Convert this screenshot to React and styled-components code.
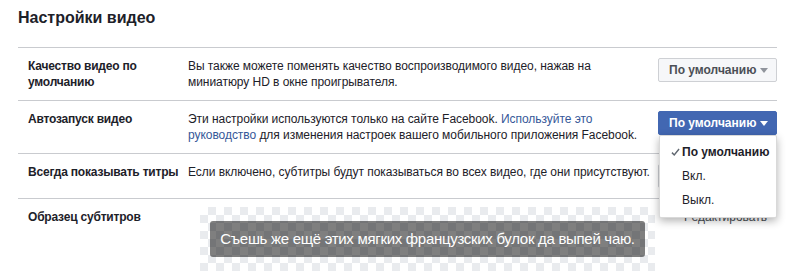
import styled, { createGlobalStyle } from "styled-components";

const GlobalStyle = createGlobalStyle`
  body {
    margin: 0;
    background: #fff;
    font-family: "Liberation Sans", Arial, Helvetica, sans-serif;
    color: #1d2129;
  }
`;

const Arrow = ({ color }) => (
  <svg width="8" height="5" viewBox="0 0 8 5">
    <path d="M0 0h8L4 5z" fill={color} />
  </svg>
);

const Check = () => (
  <svg width="9" height="8" viewBox="0 0 10 9">
    <path d="M1 5.2l2.6 2.6L9 1.2" fill="none" stroke="#606770" strokeWidth="1.6" />
  </svg>
);

const App = () => {
  return (
    <>
      <GlobalStyle />
      <Page>
        <Title>Настройки видео</Title>
        <Row>
          <Label>Качество видео по умолчанию</Label>
          <Desc>
            Вы также можете поменять качество воспроизводимого видео, нажав на
            миниатюру HD в окне проигрывателя.
          </Desc>
          <Action>
            <Select>
              По умолчанию <Arrow color="#90949c" />
            </Select>
          </Action>
        </Row>
        <Row>
          <Label>Автозапуск видео</Label>
          <Desc>
            Эти настройки используются только на сайте Facebook.{" "}
            <Link href="#">Используйте это руководство</Link> для изменения
            настроек вашего мобильного приложения Facebook.
          </Desc>
          <Action>
            <Select primary>
              По умолчанию <Arrow color="#fff" />
            </Select>
            <Menu>
              <MenuItem selected>
                <CheckSlot>
                  <Check />
                </CheckSlot>
                По умолчанию
              </MenuItem>
              <MenuItem>
                <CheckSlot />
                Вкл.
              </MenuItem>
              <MenuItem>
                <CheckSlot />
                Выкл.
              </MenuItem>
            </Menu>
          </Action>
        </Row>
        <Row>
          <Label>Всегда показывать титры</Label>
          <Desc>
            Если включено, субтитры будут показываться во всех видео, где они
            присутствуют.
          </Desc>
          <Action>
            <Select>
              Выкл. <Arrow color="#90949c" />
            </Select>
          </Action>
        </Row>
        <Row>
          <Label>Образец субтитров</Label>
          <Desc>
            <Preview>
              <Caption>
                Съешь же ещё этих мягких французских булок да выпей чаю.
              </Caption>
            </Preview>
          </Desc>
          <Action>
            <EditLink href="#">Редактировать</EditLink>
          </Action>
        </Row>
      </Page>
    </>
  );
};

const Page = styled.div`
  width: 759px;
  padding: 0 16px 0 18px;
`;

const Title = styled.h2`
  margin: 0;
  padding: 8px 0 19px;
  font-size: 16px;
  line-height: 20px;
  font-weight: bold;
  color: #1d2129;
`;

const Row = styled.div`
  display: flex;
  align-items: flex-start;
  border-top: 1px solid #c9cbcf;
  padding: 10px 0;
  font-size: 12px;
  line-height: 16px;
`;

const Label = styled.div`
  width: 155px;
  padding: 0 5px 0 10px;
  font-weight: bold;
  letter-spacing: -0.2px;
  color: #1d2129;
`;

const Desc = styled.div`
  flex: 1;
  padding-right: 3px;
  letter-spacing: -0.05px;
  color: #1d2129;
`;

const Link = styled.a`
  color: #365899;
  text-decoration: none;
`;

const Action = styled.div`
  position: relative;
  width: 119px;
  display: flex;
  justify-content: flex-end;
`;

const Select = styled.button`
  width: 119px;
  height: 24px;
  display: flex;
  align-items: center;
  justify-content: space-between;
  padding: 0 8px 0 10px;
  border: 1px solid ${(p) => (p.primary ? "#4267b2" : "#ced0d4")};
  border-radius: 2px;
  background: ${(p) => (p.primary ? "#4267b2" : "#f6f7f9")};
  color: ${(p) => (p.primary ? "#fff" : "#4b4f56")};
  font-family: inherit;
  font-size: 12px;
  font-weight: bold;
  cursor: pointer;
`;

const Menu = styled.div`
  position: absolute;
  top: 24px;
  left: 1px;
  right: 0;
  z-index: 10;
  padding: 4px 0 5px;
  background: #fff;
  border: 1px solid rgba(0, 0, 0, 0.15);
  border-radius: 2px;
  box-shadow: 0 3px 8px rgba(0, 0, 0, 0.3);
`;

const MenuItem = styled.div`
  display: flex;
  align-items: center;
  height: 24px;
  padding-left: 11px;
  font-size: 12px;
  font-weight: ${(p) => (p.selected ? "bold" : "normal")};
  color: #1d2129;
`;

const CheckSlot = styled.span`
  width: 11px;
  display: flex;
  align-items: center;
`;

const Preview = styled.div`
  margin: -2px 0 0 12px;
  height: 64px;
  display: flex;
  align-items: center;
  justify-content: center;
  background-color: #fff;
  background-image: linear-gradient(45deg, #e9ebee 25%, transparent 25%, transparent 75%, #e9ebee 75%),
    linear-gradient(45deg, #e9ebee 25%, transparent 25%, transparent 75%, #e9ebee 75%);
  background-size: 16px 16px;
  background-position: 0 0, 8px 8px;
`;

const Caption = styled.div`
  padding: 0 10px;
  height: 36px;
  line-height: 36px;
  border-radius: 3px;
  background: rgba(0, 0, 0, 0.5);
  color: #fff;
  font-size: 15px;
  letter-spacing: -0.3px;
  white-space: nowrap;
`;

const EditLink = styled.a`
  padding-right: 10px;
  color: #4b4f56;
  font-size: 12px;
  text-decoration: none;
`;

export default App;
